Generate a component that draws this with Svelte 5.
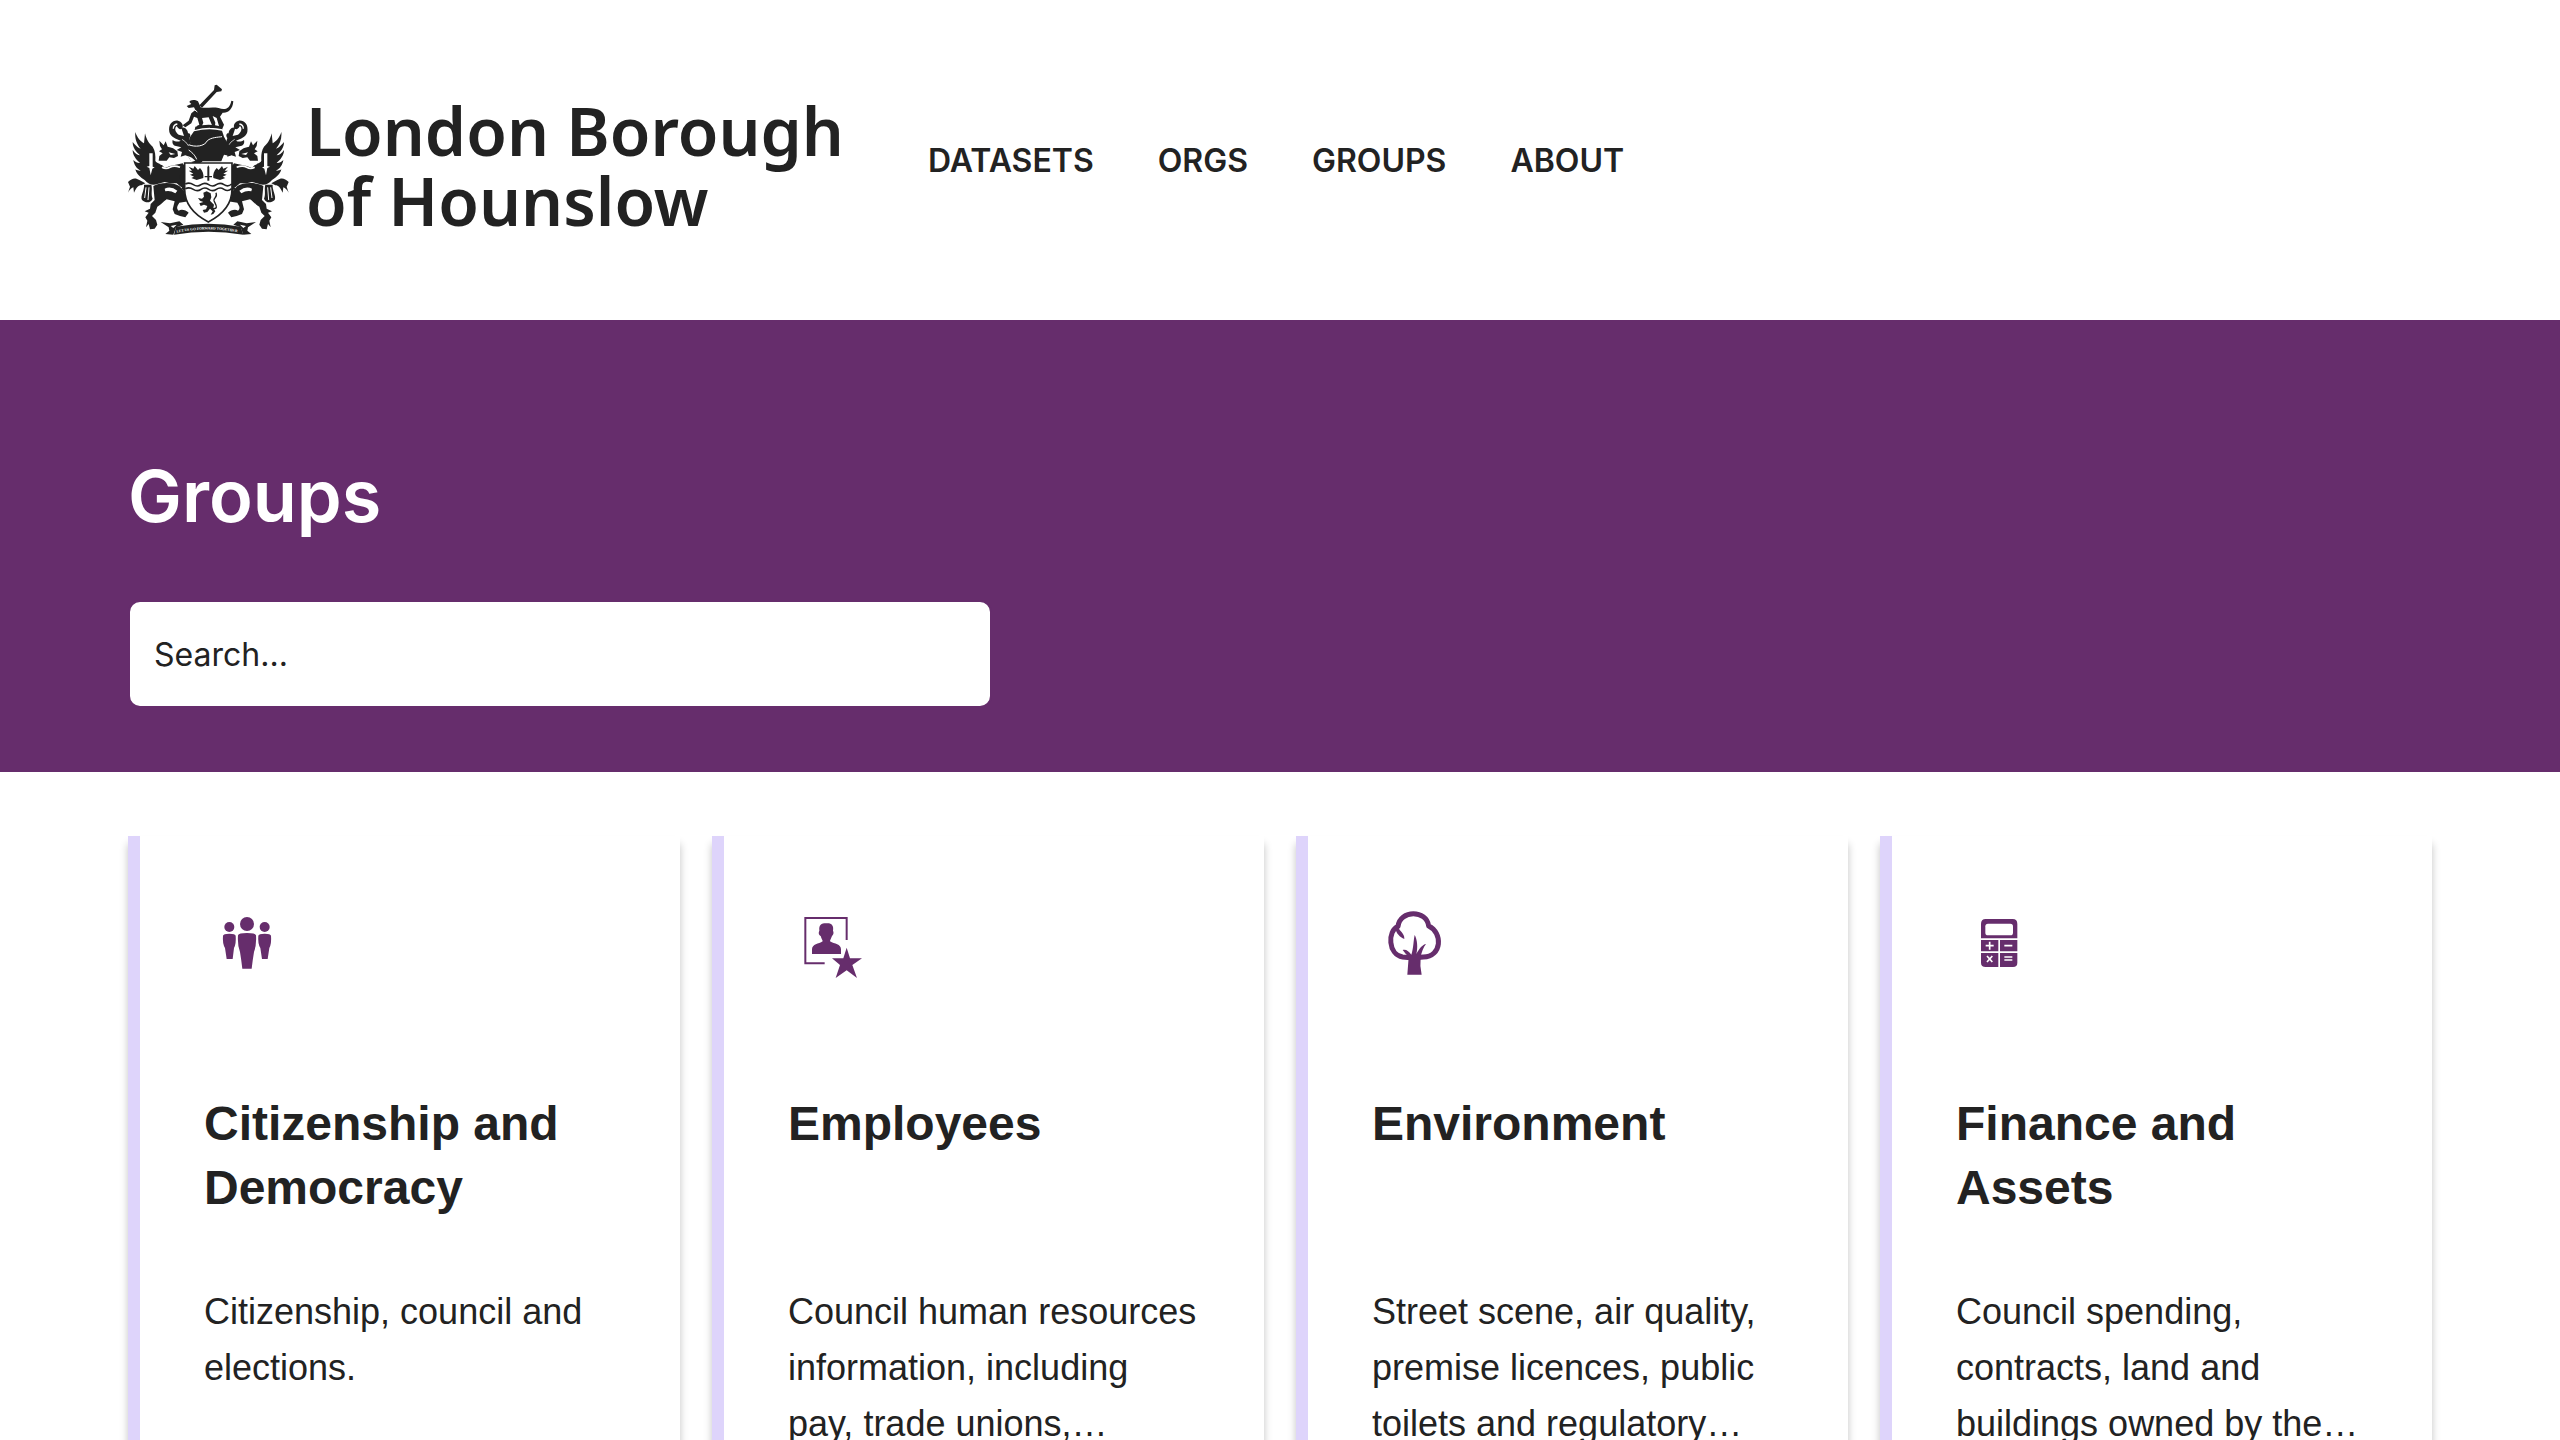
<script>
  const links = ['Datasets', 'Orgs', 'Groups', 'About'];
  const groups = [
    { icon: 'people', title: 'Citizenship and Democracy', text: 'Citizenship, council and elections.' },
    { icon: 'staff', title: 'Employees', text: 'Council human resources information, including pay, trade unions,…' },
    { icon: 'tree', title: 'Environment', text: 'Street scene, air quality, premise licences, public toilets and regulatory…' },
    { icon: 'calculator', title: 'Finance and Assets', text: 'Council spending, contracts, land and buildings owned by the…' },
  ];
  let query = $state('');
</script>

{#snippet supporter()}
  <!-- wing -->
  <path d="M46 168 C52 186 62 196 72 202 L75 172 C80 192 88 204 98 212 C106 224 107 240 106 254 C110 262 118 262 126 266 L134 276 L150 270 L188 262 L194 270 L196 330 L184 334 L170 322 L150 322 L134 318 L112 324 C98 330 84 324 74 312 C62 304 50 296 46 280 C52 284 58 285 62 284 C50 278 42 266 40 252 C46 258 54 262 60 261 C48 250 38 238 38 222 C44 232 54 238 60 238 C48 226 38 216 38 198 C44 206 54 216 62 218 C50 204 44 188 46 168Z" />
  <!-- head -->
  <path d="M118 194 L131 208 L137 196 L143 212 C156 214 164 218 172 226 L174 240 L162 246 L148 244 L140 254 L116 254 L118 240 L128 232 L117 226 L126 220 L120 210Z" />
  <path d="M88 232 L98 232 L98 272 L104 274 L97 278 L92 298 L88 276 L80 272 L88 270Z" fill="#fff" />
  <path d="M120 262 Q132 270 144 262 T178 262 M126 274 Q138 281 150 274 T180 274" fill="none" stroke="#fff" stroke-width="5" />
  <path d="M146 229 L166 234 L152 237Z" fill="#fff" />
  <path d="M24 318 C36 306 46 304 58 312 L76 322 L64 328 C54 328 50 334 42 350 L40 334 C34 336 28 342 24 350 L30 332Z" />
  <!-- tail and hind quarters -->
  <path d="M72 326 L94 326 C98 340 92 354 98 368 C90 384 76 380 66 372 C60 360 74 342 72 326Z" />
  <path d="M78 334 L74 366 M87 334 L84 372" fill="none" stroke="#fff" stroke-width="3" />
  <path d="M100 330 C120 318 160 318 178 330 L198 352 L206 376 L178 380 C172 390 168 396 176 404 C184 398 198 402 206 410 L196 424 L180 420 L164 414 L158 400 L164 376 L140 370 C128 378 124 386 112 392 L106 410 L96 420 L108 432 L112 446 L104 458 L90 460 L86 444 L78 454 L82 434 L76 424 L86 410 L74 406 L90 398 L92 384 L104 372 L102 352Z" />
  <path d="M134 338 Q152 328 172 344 L166 352 Q150 342 136 346Z" fill="#fff" />
  <path d="M178 300 L186 334 L180 348 L188 340 L194 354 L202 340 L208 352 L208 322 L194 320 L192 286Z" />
  <!-- mantling leaves -->
  <path d="M148 168 C144 144 158 132 174 134 C192 138 192 160 180 160 C174 158 172 152 170 150 C162 158 166 168 176 176 L192 180 L184 156 C194 150 204 162 204 172 C210 170 214 178 208 186 L214 206 L208 218 L208 242 L196 238 L182 242 L186 228 L170 222 L184 214 L168 210 C158 208 156 200 158 192 C166 198 176 198 182 194 C168 188 152 184 148 168Z" />
  <path d="M160 158 Q160 146 172 144" fill="none" stroke="#fff" stroke-width="4" />
  <path d="M186 190 Q198 196 206 210" fill="none" stroke="#fff" stroke-width="2" />
  <!-- scroll end -->
  <path d="M122 438 L150 442 L178 436 L190 446 L168 454 L160 476 L136 474 L148 464 L146 454Z" />
  <path d="M152 450 L170 446 L160 456Z" fill="#fff" />
{/snippet}

{#snippet crest()}
  <svg class="crest" viewBox="24 24 486 456" fill="#222" aria-hidden="true">
    <g>{@render supporter()}</g>
    <g transform="translate(530 0) scale(-1 1)">{@render supporter()}</g>
    <!-- trumpet and hound -->
    <path d="M238 88 L282 42 L284 28 L290 26 L306 40 L304 46 L290 48 L246 95Z" />
    <path d="M200 90 L214 84 L208 78 C210 70 226 70 234 76 L242 94 C256 98 274 92 296 96 C314 104 330 98 334 74 L340 76 C338 102 322 112 308 110 L300 122 L312 146 L308 156 L298 154 L290 126 L278 120 L286 140 L284 156 L270 156 L270 150 L276 148 L266 124 L246 126 L250 140 L244 154 L232 156 L230 150 L238 146 L232 126 L222 122 L214 142 L196 154 L188 148 L206 134 L214 112 L226 102 L222 94 L206 96Z" />
    <path d="M220 98 L232 108" fill="none" stroke="#fff" stroke-width="3" />
    <path d="M226 152 Q266 140 306 152 L308 160 Q266 150 224 162Z" />
    <!-- helm -->
    <path d="M222 166 Q266 154 306 164 L312 182 L324 204 L344 218 L330 240 L312 236 L304 256 L248 256 L240 262 L216 260 L206 244 L204 222 L212 206 L208 186Z" />
    <path d="M206 206 C224 214 254 212 262 194 C274 184 292 184 306 182 M206 222 C220 232 226 240 230 250" fill="none" stroke="#fff" stroke-width="3" />
    <path d="M204 240 Q216 244 226 254 L214 258Z M312 240 L304 258 L322 246Z" fill="#fff" />
    <!-- shield -->
    <path d="M194 261 H336 V340 C336 388 304 418 265 438 C226 418 194 388 194 340Z" fill="#fff" stroke="#222" stroke-width="5" />
    <path d="M196 324 Q208 318 220 326 T243 326 T266 326 T289 326 T312 326 T335 324 M196 338 Q208 332 220 340 T243 340 T266 340 T289 340 T312 340 T335 338" fill="none" stroke="#222" stroke-width="5" />
    <path d="M206 272 L220 278 L224 270 L234 282 L240 276 C248 284 252 296 250 306 L230 312 L214 306 L222 302 L210 296 L220 293 L206 284 L216 284Z M324 272 L310 278 L306 270 L296 282 L290 276 C282 284 278 296 280 306 L300 312 L316 306 L308 302 L320 296 L310 293 L324 284 L314 284Z" />
    <path d="M265 268 L268 274 V300 H276 V304 H268 V314 H262 V304 H254 V300 H262 V274Z" />
    <path d="M250 350 L260 346 L272 352 L274 364 L270 374 L282 386 L280 396 L286 406 L280 414 L272 416 L278 406 L270 398 L262 408 L252 410 L248 402 L258 400 L262 390 L252 386 L242 390 L238 382 L250 378 L240 374 L234 366 L246 368 L252 362Z" />
    <path d="M276 398 C300 400 284 382 282 374 C280 364 294 366 288 350" fill="none" stroke="#222" stroke-width="4" />
    <!-- motto scroll -->
    <path d="M168 452 Q265 434 362 452 L370 476 Q265 458 162 476Z" />
    <path id="motto" d="M170 470 Q265 451 360 470" fill="none" />
    <text class="motto"><textPath href="#motto">LET US GO FORWARD TOGETHER</textPath></text>
  </svg>
{/snippet}

<div class="page">
  <header>
    <a class="logo" href="#home">
      {@render crest()}
      <span class="name">London Borough<br />of Hounslow</span>
    </a>
    <nav>
      {#each links as link}
        <a href="#{link.toLowerCase()}">{link}</a>
      {/each}
    </nav>
  </header>

  <section class="banner">
    <h1>Groups</h1>
    <input type="search" aria-label="Search groups" placeholder="Search..." bind:value={query} />
  </section>

  <main>
    {#each groups as g}
      <a class="card" href="#group">
        <svg class="icon" viewBox="0 0 258 258" fill="#662d6c" aria-hidden="true">
          {#if g.icon === 'people'}
            <circle cx="129" cy="72" r="21" />
            <circle cx="76" cy="81" r="15" />
            <circle cx="182" cy="81" r="15" />
            <path d="M102 106 Q104 99 129 99 T156 106 Q158 136 150 156 Q146 180 143 206 H115 Q112 180 108 156 Q100 136 102 106Z" />
            <path d="M57 107 Q58 101 76 101 T95 107 Q97 130 90 144 L86 177 H68 L63 144 Q55 130 57 107Z" />
            <path d="M163 107 Q164 101 182 101 T201 107 Q203 130 196 144 L191 177 H174 L169 144 Q161 130 163 107Z" />
          {:else if g.icon === 'staff'}
            <g transform="translate(-12 0)">
              <path d="M188 120 V54 H64 V190 H122" fill="none" stroke="#662d6c" stroke-width="6" />
              <path d="M106 92 C104 74 112 70 126 70 C142 68 150 76 147 92 C151 100 146 106 144 108 C141 116 138 120 138 124 C152 132 171 132 171 148 V162 H84 V148 C84 132 104 132 116 124 C116 120 112 116 110 108 C106 106 102 100 106 92Z" />
              <path d="M188 143 L198 175 H234 L205 195 L219 234 L188 211 L155 234 L168 195 L144 175 H178Z" />
            </g>
          {:else if g.icon === 'tree'}
            <g transform="translate(-6 0)">
              <path d="M84 79 C90 29 170 29 176 78 C219 98 216 170 160 171 C136 174 120 174 98 171 C54 164 52 92 84 79Z" fill="none" stroke="#662d6c" stroke-width="15" stroke-linejoin="round" />
              <path d="M84 78 C88 96 104 98 103 117 C90 112 78 100 76 84Z" />
              <path d="M112 224 L116 172 C110 164 102 156 98 150 C108 147 117 154 124 164 C131 144 130 122 134 105 C142 118 144 144 139 162 C148 146 158 133 168 132 C160 142 154 158 152 172 Q149 196 155 224Z" />
            </g>
          {:else}
            <g transform="translate(-9 0)">
              <path d="M98 57 H179 Q193 57 193 72 V115 H84 V72 Q84 57 98 57Z" />
              <path d="M84 120 H136 V154 H84Z M141 120 H193 V154 H141Z M84 159 H136 V201 H98 Q84 201 84 188Z M141 159 H193 V188 Q193 201 180 201 H141Z" />
              <rect x="97" y="71" width="83" height="35" rx="8" fill="#fff" />
              <path d="M98 137 H122 M110 125 V149 M154 137 H178 M102 168 L118 186 M118 168 L102 186 M154 171 H178 M154 180 H178" stroke="#fff" stroke-width="5" />
            </g>
          {/if}
        </svg>
        <h2>{g.title}</h2>
        <p>{g.text}</p>
      </a>
    {/each}
  </main>
</div>

<style>
  :global(body) {
    background: #fff;
    overflow-x: hidden;
  }
  .page {
    height: 100vh;
    overflow: hidden;
    color: #222;
    font-family: Inter, sans-serif;
    font-size: 32px;
  }
  a {
    color: inherit;
    text-decoration: none;
  }
  header {
    display: flex;
    align-items: center;
    gap: 64px;
    min-height: 320px;
    box-sizing: border-box;
    padding: 0 5%;
  }
  .logo {
    display: flex;
    flex: 0 0 736px;
    align-items: center;
    gap: 16px;
  }
  .crest {
    flex: none;
    width: 162px;
    height: 152px;
  }
  .motto {
    fill: #fff;
    font: bold 11px 'Liberation Serif', serif;
  }
  .name {
    padding-top: 10px;
    font: 600 66px/70px 'Noto Sans', sans-serif;
    white-space: nowrap;
  }
  nav {
    display: flex;
    gap: 64px;
    font-weight: 600;
    text-transform: uppercase;
  }
  .banner {
    padding: 128px 5% 64px;
    background: #662d6c;
  }
  h1 {
    margin: 0 0 56px;
    color: #fff;
    font-size: 72px;
    font-weight: 600;
    line-height: 96px;
  }
  input {
    display: block;
    width: 37.5%;
    height: 108px;
    box-sizing: border-box;
    padding: 0 24px;
    border: 2px solid #662d6c;
    border-radius: 12px;
    background: #fff;
    color: #222;
    font: inherit;
  }
  input::placeholder {
    color: #222;
    opacity: 1;
  }
  main {
    display: grid;
    grid-template-columns: repeat(4, 1fr);
    gap: 32px;
    padding: 64px 5%;
    font-family: 'Liberation Sans', Arial, sans-serif;
  }
  .card {
    padding: 64px;
    border-left: 12px solid #ded4fb;
    background: #fff;
    box-shadow: 0 8px 8px rgba(0, 0, 0, 0.24);
  }
  .icon {
    display: block;
    width: 86px;
    height: 86px;
  }
  h2 {
    min-height: 128px;
    margin: 106px 0 64px;
    font-size: 48px;
    line-height: 64px;
  }
  p {
    margin: 0;
    font-size: 36px;
    line-height: 56px;
  }
</style>
